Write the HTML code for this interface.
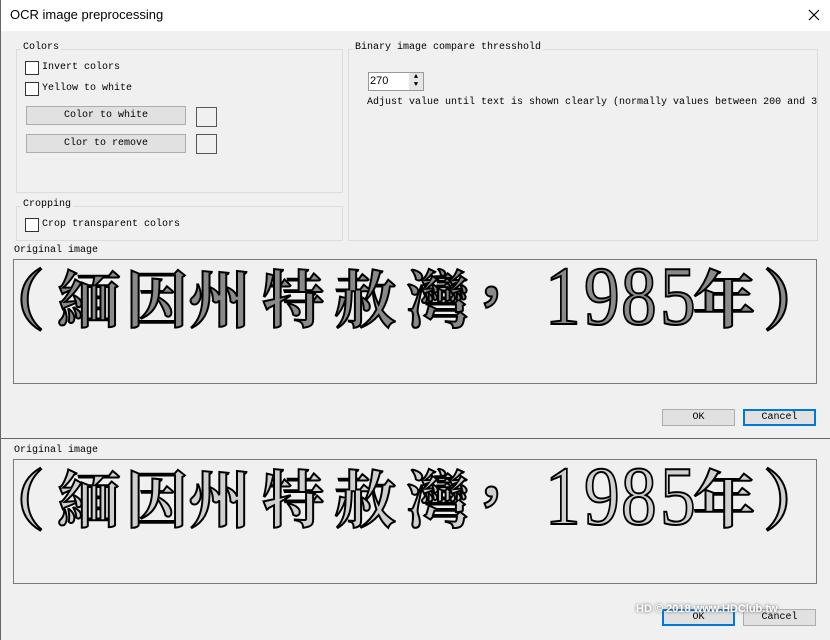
<!DOCTYPE html><html><head><meta charset="utf-8"><style>
body{margin:0;width:830px;height:640px;background:#f0f0f0;position:relative;overflow:hidden;font-family:"Liberation Mono","Noto Sans CJK SC",monospace;font-size:10px;color:#000}
.a{position:absolute}
.grp{position:absolute;border:1px solid #dcdcdc}
.lbl{position:absolute;background:#f0f0f0;padding:0 2px;white-space:nowrap}
.cb{position:absolute;width:12px;height:12px;border:1px solid #333;background:#fff}
.btn{position:absolute;background:#e1e1e1;border:1px solid #adadad;text-align:center;line-height:15px;box-sizing:border-box}
.btn.d{border:2px solid #0078d7;line-height:13px}
.img{position:absolute;border:1px solid #7a7a7a;box-sizing:border-box;overflow:hidden}
.img span{position:absolute;white-space:nowrap;-webkit-text-stroke:2px #000;text-align:center}
.c{font-family:"Noto Serif CJK SC",serif;font-weight:700;font-size:62px;line-height:62px;top:5px;width:70px}
.p{font-family:"Noto Serif CJK SC",serif;font-weight:700;font-size:66px;line-height:66px;top:3px;width:68px;text-align:left!important}
.n{font-family:"Liberation Serif",serif;font-size:84px;line-height:84px;top:-5px;width:40px;transform:scaleX(.85)}
.m{font-family:"Noto Sans CJK TC",sans-serif;font-weight:700;font-size:56px;line-height:56px;top:6px;width:70px}
.g1 span{color:#8a8a8a}.g2 span{color:#d0d0d0}
</style></head><body>
<div class="a" style="left:0;top:0;width:830px;height:31px;background:#fff"></div>
<div class="a" style="left:0;top:0;width:1px;height:640px;background:#666"></div>
<div class="a" style="left:10px;top:7px;font-family:'Liberation Sans',sans-serif;font-size:13px">OCR image preprocessing</div>
<svg class="a" style="left:808px;top:9px" width="12" height="12"><path d="M1 1L11 11M11 1L1 11" stroke="#000" stroke-width="1.2"/></svg>

<div class="grp" style="left:16px;top:49px;width:325px;height:142px"></div>
<div class="lbl" style="left:21px;top:42px">Colors</div>
<div class="cb" style="left:25px;top:61px"></div><div class="a" style="left:42px;top:62px">Invert colors</div>
<div class="cb" style="left:25px;top:82px"></div><div class="a" style="left:42px;top:83px">Yellow to white</div>
<div class="btn" style="left:26px;top:106px;width:160px;height:19px;line-height:17px">Color to white</div>
<div class="a" style="left:196px;top:107px;width:19px;height:18px;border:1px solid #555"></div>
<div class="btn" style="left:26px;top:134px;width:160px;height:19px;line-height:17px">Clor to remove</div>
<div class="a" style="left:196px;top:134px;width:19px;height:18px;border:1px solid #555"></div>

<div class="grp" style="left:16px;top:206px;width:325px;height:33px"></div>
<div class="lbl" style="left:21px;top:199px">Cropping</div>
<div class="cb" style="left:25px;top:218px"></div><div class="a" style="left:42px;top:219px">Crop transparent colors</div>

<div class="grp" style="left:348px;top:49px;width:468px;height:190px"></div>
<div class="lbl" style="left:353px;top:42px">Binary image compare thresshold</div>
<div class="a" style="left:368px;top:72px;width:56px;height:19px;border:1px solid #999;background:#fff;box-sizing:border-box;font-family:'Liberation Sans',sans-serif;font-size:11px;padding:2px 0 0 1px">270</div>
<div class="a" style="left:409px;top:73px;width:14px;height:17px;background:#e6e6e6;font-size:7px;line-height:8px;text-align:center">▲<br>▼</div>
<div class="a" style="left:367px;top:97px;white-space:nowrap">Adjust value until text is shown clearly (normally values between 200 and 3</div>

<div class="a" style="left:14px;top:245px">Original image</div>
<div class="img g1" style="left:13px;top:259px;width:804px;height:125px">
<span class="p" style="left:-35px">（</span><span class="c" style="left:40px">緬</span><span class="c" style="left:108px">因</span><span class="c" style="left:171px">州</span><span class="c" style="left:244px">特</span><span class="c" style="left:316px">赦</span><span class="c" style="left:389px">灣</span><span class="m" style="left:442px">，</span><span class="n" style="left:528px">1</span><span class="n" style="left:567px">9</span><span class="n" style="left:604px">8</span><span class="n" style="left:643px">5</span><span class="c" style="left:675px">年</span><span class="p" style="left:749px">）</span>
</div>
<div class="btn" style="left:662px;top:409px;width:73px;height:17px">OK</div>
<div class="btn d" style="left:743px;top:409px;width:73px;height:17px">Cancel</div>

<div class="a" style="left:0;top:438px;width:830px;height:1px;background:#666"></div>
<div class="a" style="left:14px;top:445px">Original image</div>
<div class="img g2" style="left:13px;top:459px;width:804px;height:125px">
<span class="p" style="left:-35px">（</span><span class="c" style="left:40px">緬</span><span class="c" style="left:108px">因</span><span class="c" style="left:171px">州</span><span class="c" style="left:244px">特</span><span class="c" style="left:316px">赦</span><span class="c" style="left:389px">灣</span><span class="m" style="left:442px">，</span><span class="n" style="left:528px">1</span><span class="n" style="left:567px">9</span><span class="n" style="left:604px">8</span><span class="n" style="left:643px">5</span><span class="c" style="left:675px">年</span><span class="p" style="left:749px">）</span>
</div>
<div class="btn d" style="left:662px;top:609px;width:73px;height:17px">OK</div>
<div class="btn" style="left:743px;top:609px;width:73px;height:17px">Cancel</div>
<div class="a" style="left:636px;top:603px;color:#fff;font-family:'Liberation Sans',sans-serif;font-size:11px;text-shadow:0 0 3px #555;font-weight:bold">HD © 2018 www.HDClub.tw</div>
</body></html>
